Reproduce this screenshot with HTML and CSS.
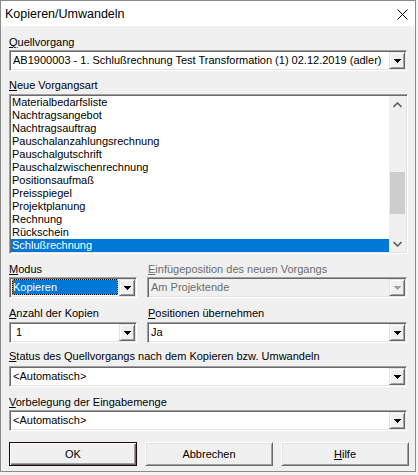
FILE: index.html
```html
<!DOCTYPE html>
<html lang="de">
<head>
<meta charset="utf-8">
<title>Kopieren/Umwandeln</title>
<link rel="stylesheet" href="styles.css">
</head>
<body>
<div class="window">
  <div class="titlebar">
    <span class="title">Kopieren/Umwandeln</span>
    <svg class="close" width="11" height="11" viewBox="0 0 11 11"><path d="M0.5 0.5L10.5 10.5M10.5 0.5L0.5 10.5" stroke="#000" stroke-width="1" fill="none"/></svg>
  </div>
  <div class="content">
    <div class="field f1">
      <div class="lbl"><u>Q</u>uellvorgang</div>
      <div class="combo g1">
        <div class="ctext">AB1900003 - 1. Schlußrechnung Test Transformation (1) 02.12.2019 (adler)</div>
        <div class="dd"><svg width="7" height="4" viewBox="0 0 7 4"><path d="M0 0h7v1h-1v1h-1v1h-1v1h-1v-1h-1v-1h-1v-1h-1z" fill="#000"/></svg></div>
      </div>
    </div>
    <div class="field f2">
      <div class="lbl"><u>N</u>eue Vorgangsart</div>
      <div class="listbox">
        <ul class="items">
          <li>Materialbedarfsliste</li>
          <li>Nachtragsangebot</li>
          <li>Nachtragsauftrag</li>
          <li>Pauschalanzahlungsrechnung</li>
          <li>Pauschalgutschrift</li>
          <li>Pauschalzwischenrechnung</li>
          <li>Positionsaufmaß</li>
          <li>Preisspiegel</li>
          <li>Projektplanung</li>
          <li>Rechnung</li>
          <li>Rückschein</li>
          <li class="selected">Schlußrechnung</li>
        </ul>
        <div class="vscroll">
          <div class="arrow"><svg width="9" height="6" viewBox="0 0 9 6"><path d="M0.5 5L4.5 1L8.5 5" stroke="#606060" stroke-width="1.6" fill="none"/></svg></div>
          <div class="track"><div class="thumb"></div></div>
          <div class="arrow"><svg width="9" height="6" viewBox="0 0 9 6"><path d="M0.5 1L4.5 5L8.5 1" stroke="#606060" stroke-width="1.6" fill="none"/></svg></div>
        </div>
      </div>
    </div>
    <div class="row r1">
      <div class="field narrow">
        <div class="lbl"><u>M</u>odus</div>
        <div class="combo g1">
          <div class="ctext selbox"><span class="focus"><span class="sel">Kopieren</span></span></div>
          <div class="dd"><svg width="7" height="4" viewBox="0 0 7 4"><path d="M0 0h7v1h-1v1h-1v1h-1v1h-1v-1h-1v-1h-1v-1h-1z" fill="#000"/></svg></div>
        </div>
      </div>
      <div class="field wide">
        <div class="lbl disabled"><u>E</u>infügeposition des neuen Vorgangs</div>
        <div class="combo g1 off">
          <div class="ctext">Am Projektende</div>
          <div class="dd"><svg width="7" height="4" viewBox="0 0 7 4"><path d="M0 0h7v1h-1v1h-1v1h-1v1h-1v-1h-1v-1h-1v-1h-1z" fill="#a0a0a0"/></svg></div>
        </div>
      </div>
    </div>
    <div class="row r2">
      <div class="field narrow">
        <div class="lbl"><u>A</u>nzahl der Kopien</div>
        <div class="combo g2">
          <div class="ctext indent">1</div>
          <div class="dd"><svg width="7" height="4" viewBox="0 0 7 4"><path d="M0 0h7v1h-1v1h-1v1h-1v1h-1v-1h-1v-1h-1v-1h-1z" fill="#000"/></svg></div>
        </div>
      </div>
      <div class="field wide">
        <div class="lbl"><u>P</u>ositionen übernehmen</div>
        <div class="combo g2">
          <div class="ctext">Ja</div>
          <div class="dd"><svg width="7" height="4" viewBox="0 0 7 4"><path d="M0 0h7v1h-1v1h-1v1h-1v1h-1v-1h-1v-1h-1v-1h-1z" fill="#000"/></svg></div>
        </div>
      </div>
    </div>
    <div class="field f5">
      <div class="lbl"><u>S</u>tatus des Quellvorgangs nach dem Kopieren bzw. Umwandeln</div>
      <div class="combo g3">
        <div class="ctext">&lt;Automatisch&gt;</div>
        <div class="dd"><svg width="7" height="4" viewBox="0 0 7 4"><path d="M0 0h7v1h-1v1h-1v1h-1v1h-1v-1h-1v-1h-1v-1h-1z" fill="#000"/></svg></div>
      </div>
    </div>
    <div class="field f6">
      <div class="lbl"><u>V</u>orbelegung der Eingabemenge</div>
      <div class="combo g1">
        <div class="ctext">&lt;Automatisch&gt;</div>
        <div class="dd"><svg width="7" height="4" viewBox="0 0 7 4"><path d="M0 0h7v1h-1v1h-1v1h-1v1h-1v-1h-1v-1h-1v-1h-1z" fill="#000"/></svg></div>
      </div>
    </div>
    <div class="buttons">
      <button class="btn default">OK</button>
      <button class="btn">Abbrechen</button>
      <button class="btn"><u>H</u>ilfe</button>
    </div>
  </div>
</div>
</body>
</html>
```

FILE: styles.css
```css
* { box-sizing: border-box; }

body {
  margin: 0;
  background: #f4f4f4;
  font-family: "Liberation Sans", Arial, sans-serif;
  font-size: 11px;
  color: #000;
}

.window {
  width: 416px;
  height: 472px;
  border: 1px solid #8a8a8a;
  background: #f0f0f0;
  display: flex;
  flex-direction: column;
  overflow: hidden;
}

.titlebar {
  height: 25px;
  flex-shrink: 0;
  background: #fff;
  display: flex;
  align-items: center;
  justify-content: space-between;
  padding: 0 7px 0 4px;
}

.title {
  font-family: "Liberation Sans", Arial, sans-serif;
  font-size: 12.5px;
  color: #000;
  padding-top: 1px;
}

.close { display: block; margin-top: 2px; }

.content {
  padding: 9px 8px 0 8px;
  display: flex;
  flex-direction: column;
}

.lbl {
  height: 14px;
  line-height: 14px;
  white-space: nowrap;
}

.lbl.disabled { color: #6d6d6d; }

u { text-decoration: underline; text-underline-offset: 1px; }

.combo {
  height: 21px;
  background: #fff;
  border: 1px solid;
  border-color: #a0a0a0 #fff #fff #a0a0a0;
  box-shadow: inset 1px 1px #696969, inset -1px -1px #e3e3e3;
  padding: 1px;
  display: flex;
  align-items: stretch;
}

.combo.off { background: #f0f0f0; color: #6d6d6d; }

.g1 { margin-top: 1px; }
.g2 { margin-top: 2px; }
.g3 { margin-top: 3px; }

.ctext {
  flex: 1;
  min-width: 0;
  padding-left: 2px;
  line-height: 17px;
  white-space: nowrap;
  overflow: hidden;
}

.ctext.indent { padding-left: 5px; }

.ctext.selbox { padding: 0; display: flex; }

.focus {
  flex: 1;
  margin: 0 1px 1px 1px;
  background: #000;
  display: flex;
}

.sel {
  flex: 1;
  background: #0078d7;
  background-clip: padding-box;
  border: 1px dotted #ff9a30;
  color: #fff;
  line-height: 14px;
  padding-left: 0;
}

.dd {
  width: 16px;
  flex-shrink: 0;
  background: #f0f0f0;
  border: 1px solid;
  border-color: #e3e3e3 #696969 #696969 #e3e3e3;
  box-shadow: inset 1px 1px #fff, inset -1px -1px #a0a0a0;
  display: flex;
  align-items: center;
  justify-content: center;
}

.dd svg { display: block; margin-left: 0; }

.f2 { margin-top: 7px; }

.listbox {
  margin-top: 2px;
  width: 399px;
  height: 160px;
  background: #fff;
  border: 1px solid;
  border-color: #a0a0a0 #fff #fff #a0a0a0;
  box-shadow: inset 1px 1px #696969, inset -1px -1px #e3e3e3;
  padding: 1px;
  display: flex;
}

.items {
  list-style: none;
  margin: 0;
  padding: 0;
  flex: 1;
}

.items li {
  height: 13px;
  line-height: 13px;
  padding-left: 1px;
  white-space: nowrap;
}

.items li.selected {
  background: #0078d7;
  color: #fff;
}

.vscroll {
  width: 17px;
  flex-shrink: 0;
  background: #f0f0f0;
  display: flex;
  flex-direction: column;
}

.arrow {
  height: 17px;
  display: flex;
  align-items: center;
  justify-content: center;
}

.arrow svg { display: block; }

.track {
  flex: 1;
  padding: 59px 1px 0 1px;
}

.thumb {
  height: 42px;
  background: #cdcdcd;
}

.row {
  display: flex;
  gap: 10px;
}

.r1 { margin-top: 8px; }
.r2 { margin-top: 8px; }

.narrow { width: 128px; flex-shrink: 0; }
.wide { flex: 1; }
.wide .lbl { padding-left: 1px; }

.f5 { margin-top: 6px; }
.f6 { margin-top: 8px; }

.buttons {
  margin-top: 11px;
  display: flex;
  gap: 8px;
}

.btn {
  width: 128px;
  height: 24px;
  flex-shrink: 0;
  margin: 0;
  padding: 0;
  font-family: "Liberation Sans", Arial, sans-serif;
  font-size: 11px;
  color: #000;
  background: #f0f0f0;
  border: 1px solid;
  border-color: #fff #696969 #696969 #fff;
  box-shadow: inset 1px 1px #e3e3e3, inset -1px -1px #a0a0a0;
}

.btn.default {
  border: 1px solid #1a0a0a;
  box-shadow: inset 1px 1px #fff, inset -1px -1px #696969, inset -2px -2px #a0a0a0;
}
```
